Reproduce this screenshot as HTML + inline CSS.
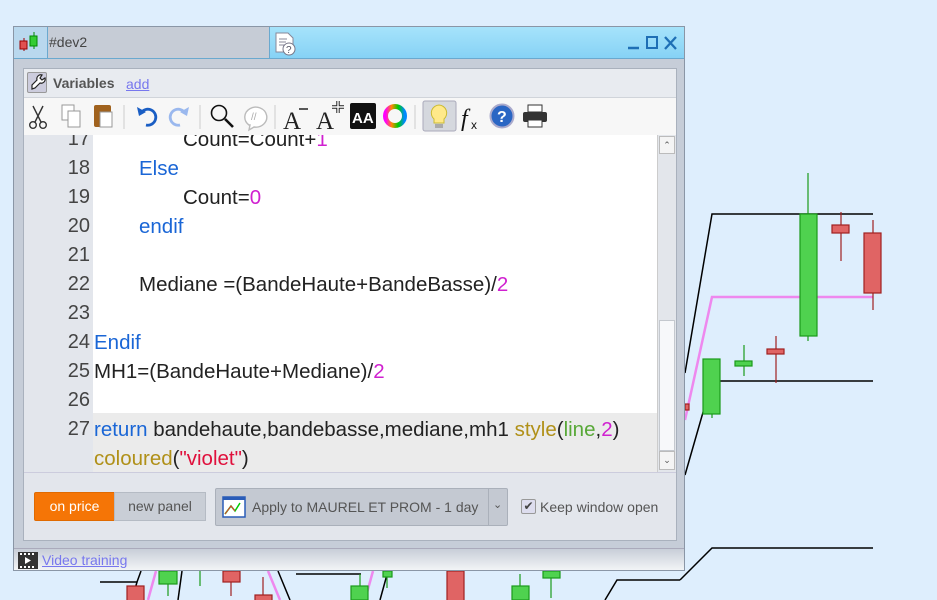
<!DOCTYPE html>
<html><head><meta charset="utf-8"><style>
*{margin:0;padding:0;box-sizing:border-box}
body{width:937px;height:600px;overflow:hidden;background:#deeefd;font-family:"Liberation Sans",sans-serif;position:relative}
.abs{position:absolute}
#win{left:13px;top:26px;width:672px;height:545px;background:#c6cdd8;border:1px solid #8a96a6}
#title{left:0;top:0;width:670px;height:32px;background:linear-gradient(#a6e3fb,#86d2f5);border-bottom:1px solid #6aa9cf}
.code{font-size:20.5px;line-height:29px;color:#222;white-space:nowrap}
.code div{height:29px}
.i1{padding-left:45px}.i2{padding-left:89px}
.ln{width:66px;text-align:right;color:#444;font-size:20px;line-height:29px}
.kw{color:#1a66d6}.num{color:#d020d0}.fn{color:#b09018}.gr{color:#58a838}.str{color:#e0103c}
</style></head><body>
<svg class="abs" style="left:0;top:0" width="937" height="600">
<g stroke="#000" stroke-width="1.5" fill="none">
<polyline points="685,373 712,214 873,214"/>
<polyline points="685,475 712,381 873,381"/>
<polyline points="680,580 712,548 873,548"/>
<polyline points="605,600 617,580 680,580"/>
<polyline points="100,582 137,582 141,571"/>
<line x1="296" y1="574" x2="361" y2="574"/>
<line x1="132" y1="600" x2="137" y2="582"/>
<line x1="178" y1="600" x2="182" y2="571"/>
<line x1="278" y1="571" x2="290" y2="600"/>
<line x1="380" y1="600" x2="388" y2="571"/>
</g>
<g stroke="#ee88ee" stroke-width="2.5" fill="none">
<polyline points="685,420 712,297 873,297"/>
<line x1="148" y1="600" x2="156" y2="571"/>
<line x1="268" y1="571" x2="280" y2="600"/>
<line x1="365" y1="600" x2="373" y2="571"/>
</g>
<g stroke="#1a9a1a" stroke-width="1.2" fill="#4fd24f">
<line x1="808" y1="173" x2="808" y2="341"/><rect x="800" y="214" width="17" height="122"/>
<line x1="712" y1="414" x2="712" y2="418"/><rect x="703" y="359" width="17" height="55"/>
<line x1="744" y1="345" x2="744" y2="376"/><rect x="735" y="361" width="17" height="5"/>
<line x1="168" y1="571" x2="168" y2="596"/><rect x="159" y="571" width="18" height="13"/>
<line x1="200" y1="571" x2="200" y2="586"/>
<line x1="360" y1="574" x2="360" y2="600"/><rect x="351" y="586" width="17" height="14"/>
<line x1="387" y1="571" x2="387" y2="588"/><rect x="383" y="571" width="9" height="6"/>
<line x1="520" y1="574" x2="520" y2="600"/><rect x="512" y="586" width="17" height="14"/>
<line x1="551" y1="571" x2="551" y2="598"/><rect x="543" y="571" width="17" height="7"/>
</g>
<g stroke="#a02020" stroke-width="1.2" fill="#e06464">
<line x1="776" y1="336" x2="776" y2="383"/><rect x="767" y="349" width="17" height="5"/>
<line x1="841" y1="212" x2="841" y2="261"/><rect x="832" y="225" width="17" height="8"/>
<line x1="873" y1="220" x2="873" y2="310"/><rect x="864" y="233" width="17" height="60"/>
<rect x="685" y="404" width="4" height="6"/>
<rect x="127" y="586" width="17" height="16"/>
<line x1="231" y1="571" x2="231" y2="596"/><rect x="223" y="571" width="17" height="11"/>
<line x1="263" y1="577" x2="263" y2="600"/><rect x="255" y="595" width="17" height="6"/>
<rect x="447" y="571" width="17" height="31"/>
</g>
</svg>

<div id="win" class="abs">
 <div id="title" class="abs">
  <div class="abs" style="left:0;top:0;width:34px;height:31px;border-right:1px solid #6aa9cf;background:#b9d8ee">
   <svg width="34" height="31"><line x1="10" y1="11" x2="10" y2="24" stroke="#900"/><rect x="6" y="14" width="7" height="8" fill="#e05050" stroke="#900"/><line x1="20" y1="5" x2="20" y2="22" stroke="#080"/><rect x="16" y="9" width="7" height="10" fill="#3c3" stroke="#080"/></svg>
  </div>
  <div class="abs" style="left:34px;top:0;width:222px;height:31px;background:#c6ccd6;border-right:1px solid #6aa9cf;font-size:14px;color:#444;padding:7px 0 0 1px">#dev2</div>
  <svg class="abs" style="left:259px;top:4px" width="26" height="26"><path d="M3 2h12l5 5v14H3z" fill="#fff" stroke="#889"/><path d="M6 8h8M6 11h7M6 14h5" stroke="#889"/><circle cx="16" cy="18" r="6" fill="#fff" stroke="#778"/><text x="13" y="22" font-size="10" fill="#556" font-family="Liberation Sans">?</text></svg>
  <svg class="abs" style="left:612px;top:8px" width="56" height="16"><path d="M2 13h11" stroke="#1e6fb5" stroke-width="2.5"/><rect x="21" y="2" width="10" height="11" fill="none" stroke="#1e6fb5" stroke-width="2"/><path d="M39 2l11 12M50 2L39 14" stroke="#1e6fb5" stroke-width="2.3"/></svg>
 </div>
 <div class="abs" style="left:9px;top:41px;width:654px;height:473px;background:#e3e6ec;border:1px solid #a9b1bd">
  <div class="abs" style="left:0;top:0;width:652px;height:29px;background:#e8ebf0;border-bottom:1px solid #d0d4da">
   <div class="abs" style="left:3px;top:3px;width:20px;height:21px;border:1px solid #999;background:#ccd;border-radius:2px"><svg width="18" height="19"><path d="M4 16L4 12l5-5a4 4 0 0 1 5-5l-2 3 2 2 3-2a4 4 0 0 1-5 5l-5 5z" fill="#fff" stroke="#222" stroke-width="1.2"/></svg></div>
   <div class="abs" style="left:29px;top:6px;font-size:14px;font-weight:bold;color:#555">Variables</div>
   <div class="abs" style="left:102px;top:7px;font-size:14px;color:#7777ee;text-decoration:underline">add</div>
  </div>
  <div class="abs" style="left:0;top:29px;width:652px;height:37px;background:#f7f7f7">
   <svg width="560" height="37">
    <defs><linearGradient id="g"><stop offset="0" stop-color="#f0f"/><stop offset=".33" stop-color="#f80"/><stop offset=".66" stop-color="#0c0"/><stop offset="1" stop-color="#08f"/></linearGradient></defs>
    <g stroke="#ccc"><line x1="100" y1="7" x2="100" y2="31"/><line x1="176" y1="7" x2="176" y2="31"/><line x1="251" y1="7" x2="251" y2="31"/><line x1="391" y1="7" x2="391" y2="31"/></g>
    <g transform="translate(14,18)" fill="none" stroke="#333" stroke-width="1.4"><circle cx="-5" cy="9" r="3.3"/><circle cx="5" cy="9" r="3.3"/><path d="M-3 6L5 -10M3 6L-5 -10"/></g>
    <g transform="translate(47,18)" fill="#fff" stroke="#999"><rect x="-9" y="-11" width="12" height="15"/><rect x="-3" y="-5" width="12" height="16"/></g>
    <g transform="translate(79,18)"><rect x="-9" y="-11" width="17" height="22" rx="2" fill="#a0621e"/><rect x="-3" y="-4" width="12" height="15" fill="#fff" stroke="#999"/></g>
    <g transform="translate(123,18)"><path d="M-1 9a8 8 0 1 0 -5-12" fill="none" stroke="#1a5ec4" stroke-width="2.8"/><path d="M-10 -9l2 9 7-4z" fill="#1a5ec4"/></g>
    <g transform="translate(155,18)"><path d="M1 9a8 8 0 1 1 5-12" fill="none" stroke="#9ab8ee" stroke-width="2.8"/><path d="M10 -9l-2 9-7-4z" fill="#9ab8ee"/></g>
    <g transform="translate(198,18)"><circle cx="-3" cy="-3" r="7.5" fill="none" stroke="#111" stroke-width="1.6"/><path d="M3 3l8 8" stroke="#111" stroke-width="2.6"/></g>
    <g transform="translate(231,18)"><path d="M-6 9a11 10 0 1 1 5 2l-5 3 1-5z" fill="#fff" stroke="#bbb" stroke-width="1.4"/><text x="-4" y="4" font-size="10" fill="#aaa">//</text></g>
    <g transform="translate(270,18)"><text x="-11" y="13" font-size="25" font-family="Liberation Serif" fill="#222">A</text><path d="M5 -7h9" stroke="#222" stroke-width="1.5"/></g>
    <g transform="translate(305,18)"><text x="-13" y="13" font-size="25" font-family="Liberation Serif" fill="#222">A</text><path d="M3 -9h12M9 -15v12" stroke="#222" stroke-width="3.4"/><path d="M3 -9h12M9 -15v12" stroke="#fff" stroke-width="1.4"/></g>
    <g transform="translate(339,18)"><rect x="-13" y="-13" width="26" height="26" rx="2" fill="#111"/><text x="-11" y="7" font-size="15" font-weight="bold" fill="#fff">AA</text></g>
    <g transform="translate(371,18)"><circle r="9.5" fill="none" stroke="url(#g)" stroke-width="5"/></g>
    <rect x="399" y="3" width="33" height="30" rx="2" fill="#d5d8de" stroke="#aab"/>
    <g transform="translate(415,18)"><path d="M0 -11a8 8 0 0 1 5 14v4h-10v-4a8 8 0 0 1 5-14z" fill="#ffe98a" stroke="#cb3"/><rect x="-4" y="8" width="8" height="4" fill="#aaa"/></g>
    <g transform="translate(446,18)"><text x="-9" y="10" font-size="24" font-style="italic" font-family="Liberation Serif" fill="#111">f</text><text x="1" y="13" font-size="12" fill="#111">x</text></g>
    <g transform="translate(478,18)"><circle r="11.5" fill="#2a66c4" stroke="#aac" stroke-width="2"/><text x="-5" y="6" font-size="16" font-weight="bold" fill="#fff">?</text></g>
    <g transform="translate(511,18)"><rect x="-12" y="-4" width="24" height="10" rx="2" fill="#333"/><rect x="-7" y="-11" width="14" height="7" fill="#fff" stroke="#333"/><rect x="-7" y="4" width="14" height="7" fill="#fff" stroke="#333"/></g>
   </svg>
  </div>
  <div class="abs" style="left:0;top:66px;width:69px;height:337px;background:#e3e6ec;overflow:hidden">
   <div class="abs ln" style="top:-10px;left:0">17<br>18<br>19<br>20<br>21<br>22<br>23<br>24<br>25<br>26<br>27</div>
  </div>
  <div class="abs" style="left:69px;top:66px;width:564px;height:337px;background:#fff;overflow:hidden">
   <div class="abs" style="left:0;top:278px;width:564px;height:59px;background:#ebebeb"></div>
   <div class="abs code" style="left:1px;top:-10px">
    <div class="i2">Count=Count+<span class="num">1</span></div>
    <div class="i1"><span class="kw">Else</span></div>
    <div class="i2">Count=<span class="num">0</span></div>
    <div class="i1"><span class="kw">endif</span></div>
    <div></div>
    <div class="i1">Mediane =(BandeHaute+BandeBasse)/<span class="num">2</span></div>
    <div></div>
    <div><span class="kw">Endif</span></div>
    <div>MH1=(BandeHaute+Mediane)/<span class="num">2</span></div>
    <div></div>
    <div><span class="kw">return</span> bandehaute,bandebasse,mediane,mh1 <span class="fn">style</span>(<span class="gr">line</span>,<span class="num">2</span>)</div>
    <div><span class="fn">coloured</span>(<span class="str">"violet"</span>)</div>
   </div>
  </div>
  <div class="abs" style="left:633px;top:66px;width:19px;height:337px;background:#e3e6eb;border-left:1px solid #ccc">
   <div class="abs" style="left:1px;top:1px;width:16px;height:18px;background:#f4f4f4;border:1px solid #bbb;font-size:9px;text-align:center;color:#555;line-height:16px">&#8963;</div>
   <div class="abs" style="left:1px;top:185px;width:16px;height:131px;background:#f7f8fa;border:1px solid #c4c8ce"></div>
   <div class="abs" style="left:1px;top:316px;width:16px;height:19px;background:#f4f4f4;border:1px solid #bbb;font-size:9px;text-align:center;color:#555;line-height:16px">&#8964;</div>
  </div>
  <div class="abs" style="left:0;top:403px;width:652px;height:1px;background:#ccd"></div>
  <div class="abs" style="left:10px;top:423px;width:81px;height:29px;background:#f57506;border:1px solid #e06a00;border-radius:2px 0 0 2px;color:#fff;font-size:14px;text-align:center;line-height:27px">on price</div>
  <div class="abs" style="left:90px;top:423px;width:92px;height:29px;background:#c9ced6;border:1px solid #b5bbc4;color:#555;font-size:14px;text-align:center;line-height:27px">new panel</div>
  <div class="abs" style="left:191px;top:419px;width:293px;height:38px;background:#c4c9d2;border:1px solid #aab0ba;border-radius:2px">
   <svg class="abs" style="left:6px;top:7px" width="24" height="22"><rect x="1" y="1" width="22" height="20" fill="#fff" stroke="#2a5cb8" stroke-width="1.5"/><rect x="1" y="1" width="22" height="3" fill="#2a5cb8"/><path d="M3 18l6-8 4 5 5-8" fill="none" stroke="#0c0" stroke-width="1.5"/><path d="M3 18l6-8 4 5" fill="none" stroke="#e33" stroke-width="1"/></svg>
   <div class="abs" style="left:36px;top:10px;font-size:14px;color:#555">Apply to MAUREL ET PROM - 1 day</div>
   <div class="abs" style="left:272px;top:0;width:1px;height:36px;background:#aab0ba"></div>
   <div class="abs" style="left:277px;top:9px;font-size:11px;color:#555">&#8964;</div>
  </div>
  <div class="abs" style="left:497px;top:430px;width:15px;height:15px;background:#dde;border:1px solid #999;border-radius:2px;font-size:12px;line-height:13px;text-align:center;color:#444">&#10004;</div>
  <div class="abs" style="left:516px;top:430px;font-size:14px;color:#555">Keep window open</div>
 </div>
 <div class="abs" style="left:0;top:521px;width:670px;height:22px;background:linear-gradient(#c8ced8,#f2f4f6);border-top:1px solid #aab">
  <svg class="abs" style="left:4px;top:3px" width="20" height="17"><rect width="20" height="17" fill="#333"/><g fill="#fff"><rect x="2" y="1" width="2" height="2"/><rect x="6" y="1" width="2" height="2"/><rect x="10" y="1" width="2" height="2"/><rect x="14" y="1" width="2" height="2"/><rect x="2" y="14" width="2" height="2"/><rect x="6" y="14" width="2" height="2"/><rect x="10" y="14" width="2" height="2"/><rect x="14" y="14" width="2" height="2"/><path d="M7 5l6 3.5-6 3.5z"/></g></svg>
  <div class="abs" style="left:28px;top:3px;font-size:14px;color:#7777ee;text-decoration:underline">Video training</div>
 </div>
</div>
</body></html>
